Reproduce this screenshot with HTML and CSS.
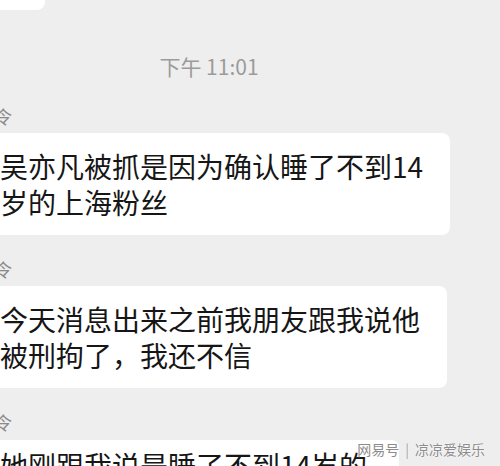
FILE: index.html
```html
<!DOCTYPE html>
<html lang="zh-CN">
<head>
<meta charset="utf-8">
<title>聊天截图</title>
<link rel="stylesheet" href="styles.css">
</head>
<body>
<div class="screen">
  <div class="prev-bubble"></div>
  <div class="time">下午 11:01</div>
  <div class="msg msg-first">
    <div class="name">令</div>
    <div class="bubble">吴亦凡被抓是因为确认睡了不到14<br>岁的上海粉丝</div>
  </div>
  <div class="msg">
    <div class="name">令</div>
    <div class="bubble">今天消息出来之前我朋友跟我说他<br>被刑拘了，我还不信</div>
  </div>
  <div class="msg">
    <div class="name">令</div>
    <div class="bubble bubble-last">她刚跟我说是睡了不到14岁的<br>粉丝</div>
  </div>
  <div class="watermark"><span class="wm-brand">网易号</span><span class="wm-sep">|</span><span class="wm-author">凉凉爱娱乐</span></div>
</div>
</body>
</html>
```

FILE: styles.css
```css
html, body {
  margin: 0;
  padding: 0;
}

body {
  width: 500px;
  height: 466px;
  overflow: hidden;
  background: #eeeeee;
  font-family: "Noto Sans CJK SC", "Noto Sans", sans-serif;
}

.screen {
  position: relative;
  width: 500px;
  height: 466px;
  overflow: hidden;
  display: flex;
  flex-direction: column;
  align-items: flex-start;
}

.screen > * {
  flex-shrink: 0;
}

.prev-bubble {
  width: 65px;
  height: 10px;
  margin-left: -20px;
  background: #ffffff;
  border-radius: 0 0 8px 0;
}

.time {
  align-self: stretch;
  margin-top: 44px;
  text-align: center;
  font-size: 21px;
  line-height: 24px;
  color: #9b9b9b;
  padding-right: 82px;
}

.msg {
  display: flex;
  flex-direction: column;
  align-items: flex-start;
  margin-top: 24px;
}

.msg-first {
  margin-top: 28px;
}

.name {
  margin-left: -6px;
  font-size: 18px;
  line-height: 20px;
  color: #8a8a8a;
}

.bubble {
  margin-top: 7px;
  margin-left: -20px;
  padding: 15px 27px 15px 20px;
  background: #ffffff;
  border-radius: 8px;
  font-size: 28px;
  line-height: 36px;
  color: #161616;
  white-space: nowrap;
}

.bubble-last {
  margin-top: 8px;
  padding-top: 7px;
  padding-right: 32px;
}

.watermark {
  position: absolute;
  right: 15px;
  bottom: 8px;
  display: flex;
  align-items: center;
  gap: 6px;
  font-size: 14px;
  line-height: 18px;
  color: #8c8c8c;
  text-shadow: 0 0 2px #ffffff, 0 0 1px #ffffff;
}

.wm-brand {
  letter-spacing: 0;
}

.wm-sep {
  font-size: 14px;
  color: #a0a0a0;
}

.wm-author {
  letter-spacing: 0;
}
```
